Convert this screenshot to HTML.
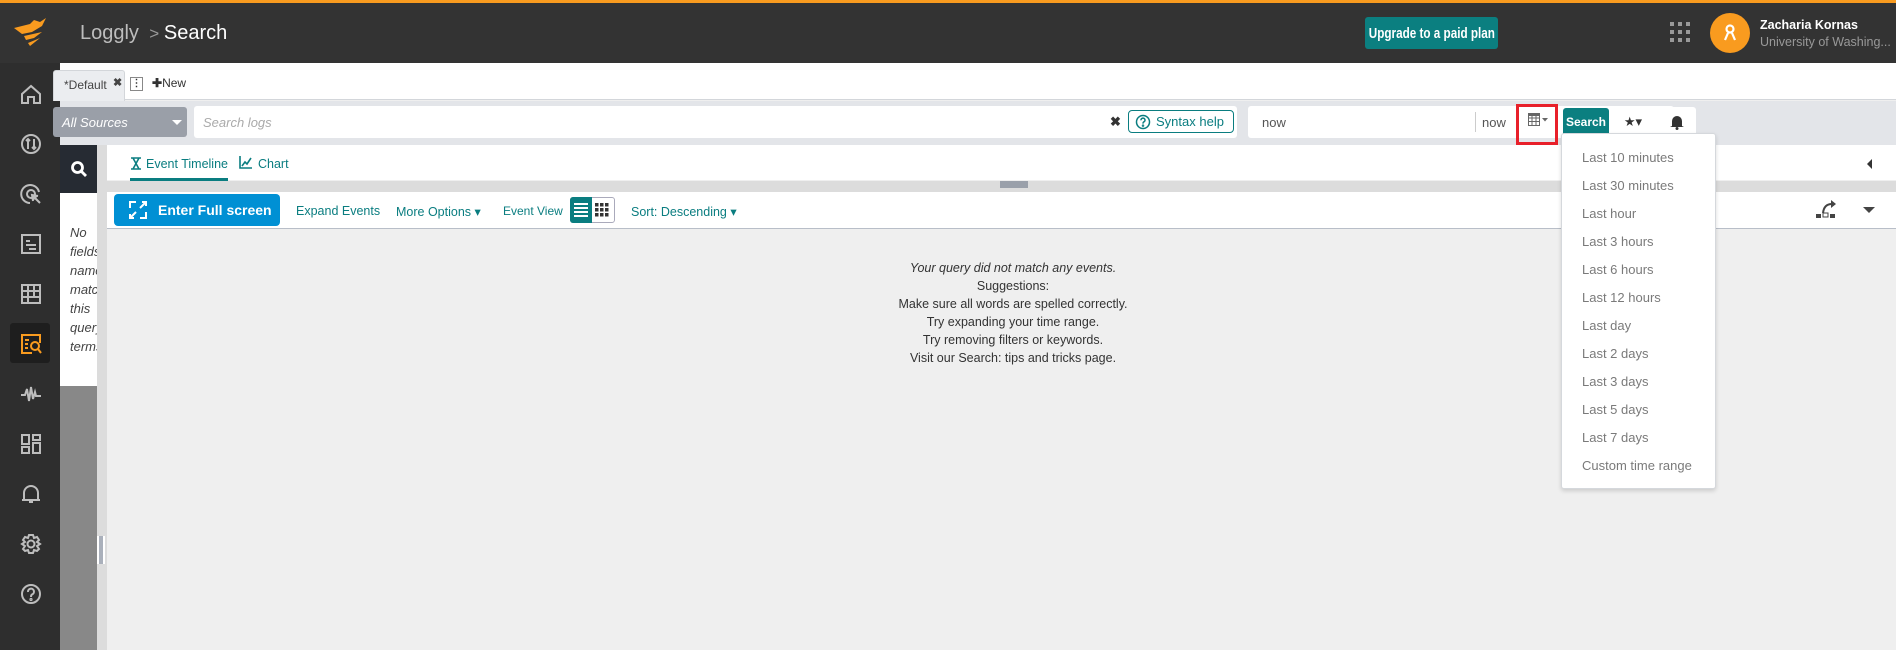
<!DOCTYPE html>
<html><head><meta charset="utf-8">
<style>
*{box-sizing:border-box;margin:0;padding:0}
body{width:1896px;height:650px;overflow:hidden;position:relative;font-family:"Liberation Sans",sans-serif;background:#efefef}
.a{position:absolute;white-space:nowrap}
.teal{color:#0a7d80}
.sb svg{position:absolute;left:20px;width:22px;height:22px;fill:none;stroke:#bdbdbd;stroke-width:2}
.dd div{height:28px;line-height:28px;padding-left:20px;font-size:13px;color:#7a7a7a}
.msg div{height:18px;line-height:18px}
</style></head><body>
<!-- header -->
<div class="a" style="left:0;top:0;width:1896px;height:3px;background:#f99b1f"></div>
<div class="a" style="left:0;top:3px;width:1896px;height:60px;background:#333"></div>
<svg class="a" style="left:12px;top:16px" width="36" height="32" viewBox="0 0 36 32"><path d="M2 12 L18 8 L22 4 L28 6 L34 2 L30 10 L20 16 L10 18 Z" fill="#f99b1f"/><path d="M12 20 L30 16 L22 22 L14 24 Z" fill="#f99b1f"/><path d="M16 27 L28 22 L18 30 Z" fill="#f99b1f"/></svg>
<div class="a" style="left:80px;top:22px;font-size:20px;color:#bdbdbd">Loggly <span style="color:#999;font-size:17px">&nbsp;&gt;&nbsp;</span><span style="color:#fff">Search</span></div>
<div class="a" style="left:1365px;top:17px;width:133px;height:32px;background:#0b7f80;border-radius:3px;display:flex;justify-content:center;align-items:center"><span style="display:inline-block;color:#fff;font-weight:bold;font-size:15px;transform:scaleX(0.78)">Upgrade to a paid plan</span></div>
<svg class="a" style="left:1670px;top:22px" width="22" height="22"><g fill="#999"><rect x="0" y="0" width="4" height="4"/><rect x="8" y="0" width="4" height="4"/><rect x="16" y="0" width="4" height="4"/><rect x="0" y="8" width="4" height="4"/><rect x="8" y="8" width="4" height="4"/><rect x="16" y="8" width="4" height="4"/><rect x="0" y="16" width="4" height="4"/><rect x="8" y="16" width="4" height="4"/><rect x="16" y="16" width="4" height="4"/></g></svg>
<div class="a" style="left:1710px;top:13px;width:40px;height:40px;border-radius:50%;background:#f99b1f"></div>
<svg class="a" style="left:1720px;top:23px" width="20" height="20" viewBox="0 0 20 20" fill="none" stroke="#fff" stroke-width="2.2"><circle cx="10" cy="6" r="3.5"/><path d="M5 17 L8 10 M15 17 L12 10"/></svg>
<div class="a" style="left:1760px;top:18px;font-size:12.5px;font-weight:bold;color:#fff">Zacharia Kornas</div>
<div class="a" style="left:1760px;top:35px;font-size:12.5px;color:#999">University of Washing...</div>
<!-- sidebar -->
<div class="a sb" style="left:0;top:63px;width:60px;height:587px;background:#2e2e2e">
<div class="a" style="left:10px;top:260px;width:40px;height:40px;background:#1e1e1e;border-radius:3px"></div>
<svg style="top:20px" viewBox="0 0 22 22"><path d="M2 11 L11 3 L20 11 V20 H14 V14 H8 V20 H2 Z"/></svg>
<svg style="top:70px" viewBox="0 0 22 22"><circle cx="11" cy="11" r="9"/><path d="M8 6 V16 M6 8 L8 6 L10 8 M14 6 V16 M12 14 L14 16 L16 14"/></svg>
<svg style="top:120px" viewBox="0 0 22 22"><path d="M19 9 A9 9 0 1 0 10 20"/><circle cx="11" cy="11" r="4"/><path d="M12 12 L20 20 M13 18 L12 12 L18 13" fill="#bdbdbd"/></svg>
<svg style="top:170px" viewBox="0 0 22 22"><rect x="2" y="2" width="18" height="18"/><path d="M6 8 H10 M6 12 H16 M9 16 H16"/></svg>
<svg style="top:220px" viewBox="0 0 22 22"><path d="M2 2 H20 V20 H2 Z M2 8 H20 M2 14 H20 M8 2 V20 M14 2 V14"/></svg>
<svg style="top:270px;stroke:#f99b1f" viewBox="0 0 22 22"><path d="M20 10 V2 H2 V20 H12"/><path d="M5 7 H9 M5 11 H8 M5 15 H8"/><circle cx="15" cy="13" r="4"/><path d="M18 16 L21 20"/></svg>
<svg style="top:320px" viewBox="0 0 22 22"><path d="M1 12 H5 L7 6 L9 18 L11 4 L13 16 L15 9 L16 13 H21"/></svg>
<svg style="top:370px" viewBox="0 0 22 22"><rect x="2" y="2" width="7" height="9"/><rect x="2" y="14" width="7" height="6"/><rect x="13" y="2" width="7" height="5"/><rect x="13" y="10" width="7" height="10"/></svg>
<svg style="top:420px" viewBox="0 0 22 22"><path d="M4 17 V10 A7 7 0 0 1 18 10 V17 Z M2 17 H20 M9 19 H13"/></svg>
<svg style="top:470px" viewBox="0 0 22 22"><circle cx="11" cy="11" r="3.5"/><path d="M9 2 H13 L14 5 L17 4 L19 7 L17 9 L20 11 L17 13 L19 16 L17 18 L14 17 L13 20 H9 L8 17 L5 18 L3 16 L5 13 L2 11 L5 9 L3 7 L5 4 L8 5 Z"/></svg>
<svg style="top:520px" viewBox="0 0 22 22"><circle cx="11" cy="11" r="9"/><path d="M8 9 A3 3 0 1 1 12 11.5 Q11 12 11 14"/><circle cx="11" cy="16.5" r=".6"/></svg>
</div>
<!-- tab row -->
<div class="a" style="left:60px;top:63px;width:1836px;height:37px;background:#fff;border-bottom:1px solid #d3d6da"></div>
<div class="a" style="left:53px;top:70px;width:72px;height:31px;background:#ebedf0;border:1px solid #d3d6da;border-bottom:none;border-radius:3px 3px 0 0"></div>
<div class="a" style="left:64px;top:78px;font-size:12px;color:#444">*Default</div>
<div class="a" style="left:113px;top:76px;font-size:11px;color:#444;font-weight:bold">✖</div>
<div class="a" style="left:130px;top:77px;width:13px;height:14px;border:1px solid #888;font-size:10px;line-height:12px;text-align:center;color:#333;font-weight:bold">⋮</div>
<div class="a" style="left:152px;top:76px;font-size:12px;color:#333"><b>✚</b>New</div>
<!-- search row -->
<div class="a" style="left:60px;top:101px;width:1836px;height:44px;background:#e3e5e9"></div>
<div class="a" style="left:53px;top:107px;width:134px;height:30px;background:#9a9fa8;border-radius:3px"></div>
<div class="a" style="left:62px;top:115px;font-size:13px;color:#fff;font-style:italic">All Sources</div>
<div class="a" style="left:172px;top:120px;border:5px solid transparent;border-top:5px solid #fff"></div>
<div class="a" style="left:194px;top:106px;width:1043px;height:32px;background:#fff;border-radius:3px"></div>
<div class="a" style="left:203px;top:115px;font-size:13px;color:#aaa;font-style:italic">Search logs</div>
<div class="a" style="left:1110px;top:114px;font-size:13px;color:#333;font-weight:bold">✖</div>
<div class="a" style="left:1128px;top:110px;width:106px;height:23px;border:1px solid #0a7d80;border-radius:4px;display:flex;align-items:center;padding-left:6px;font-size:13px"><svg width="16" height="16" viewBox="0 0 16 16" fill="none" stroke="#0a7d80" stroke-width="1.5"><circle cx="8" cy="8" r="6.5"/><path d="M6 6.3 A2 2 0 1 1 8.6 8 Q8 8.4 8 9.6"/><circle cx="8" cy="11.6" r=".5"/></svg><span class="teal" style="margin-left:5px">Syntax help</span></div>
<div class="a" style="left:1248px;top:106px;width:426px;height:32px;background:#fff;border-radius:3px"></div>
<div class="a" style="left:1262px;top:115px;font-size:13px;color:#555">now</div>
<div class="a" style="left:1475px;top:112px;width:1px;height:20px;background:#ccc"></div>
<div class="a" style="left:1482px;top:115px;font-size:13px;color:#555">now</div>
<svg class="a" style="left:1528px;top:113px" width="22" height="14"><rect x="0.5" y="1.5" width="11" height="11" fill="none" stroke="#666"/><path d="M0 5 H12 M0 8.5 H12 M4 2 V13 M8 2 V13" stroke="#666"/><rect x="0" y="0" width="12" height="3" fill="#666"/><path d="M14 5 L20 5 L17 8.5 Z" fill="#666"/></svg>
<div class="a" style="left:1516px;top:104px;width:42px;height:41px;border:3px solid #e8202a"></div>
<div class="a" style="left:1563px;top:108px;width:46px;height:29px;background:#0b7f80;border-radius:3px;color:#fff;font-weight:bold;font-size:12px;line-height:29px;text-align:center">Search</div>
<div class="a" style="left:1617px;top:107px;width:32px;height:30px;background:#fff;border-radius:3px;font-size:13px;line-height:30px;text-align:center;color:#333">★▾</div>
<div class="a" style="left:1656px;top:107px;width:40px;height:30px;background:#fff;border-radius:3px"></div>
<svg class="a" style="left:1670px;top:114px" width="14" height="16" fill="#333"><path d="M2 12 V7 A5 5 0 0 1 12 7 V12 L14 13 H0 Z"/><circle cx="7" cy="14.5" r="1.5"/></svg>
<!-- left panel -->
<div class="a" style="left:60px;top:145px;width:37px;height:48px;background:#262b33"></div>
<svg class="a" style="left:70px;top:160px" width="18" height="18" viewBox="0 0 18 18" fill="none" stroke="#fff" stroke-width="2.8"><circle cx="7.5" cy="7.5" r="5"/><path d="M11 11 L16 16"/></svg>
<div class="a" style="left:60px;top:193px;width:37px;height:193px;background:#fff;overflow:hidden;font-size:13px;font-style:italic;color:#444;line-height:19px;padding:30px 0 0 10px">No<br>fields<br>names<br>match<br>this<br>query<br>terms</div>
<div class="a" style="left:60px;top:386px;width:37px;height:264px;background:#888"></div>
<div class="a" style="left:97px;top:145px;width:10px;height:505px;background:#dcdcdc"></div>
<div class="a" style="left:97px;top:536px;width:8px;height:28px;background:#aab0bb;border:1px solid #fff;border-width:0 2px"></div>
<!-- timeline row -->
<div class="a" style="left:107px;top:145px;width:1789px;height:35px;background:#fff"></div>
<svg class="a" style="left:131px;top:157px" width="10" height="13" fill="none" stroke="#0a7d80" stroke-width="1.6"><path d="M0 1 H10 M0 12 H10 M2 1 L8 12 M8 1 L2 12"/></svg>
<div class="a teal" style="left:146px;top:157px;font-size:12.5px">Event Timeline</div>
<svg class="a" style="left:239px;top:156px" width="13" height="13" fill="none" stroke="#0a7d80" stroke-width="1.6"><path d="M1 0 V12 H13 M3 10 L6 6 L8 8 L12 2"/></svg>
<div class="a teal" style="left:258px;top:157px;font-size:12.5px">Chart</div>
<div class="a" style="left:130px;top:178px;width:98px;height:3px;background:#0a7d80"></div>
<div class="a" style="left:107px;top:181px;width:1789px;height:11px;background:#dcdcdc"></div>
<div class="a" style="left:1000px;top:181px;width:28px;height:7px;background:#9aa0aa;border-top:2px solid #9aa0aa"></div>
<div class="a" style="left:1867px;top:159px;border:5px solid transparent;border-right:5px solid #333;border-left:none"></div>
<!-- toolbar -->
<div class="a" style="left:107px;top:192px;width:1789px;height:37px;background:#fff;border-bottom:1px solid #b8bec8"></div>
<div class="a" style="left:114px;top:194px;width:166px;height:32px;background:#0090d4;border-radius:4px;color:#fff;font-weight:bold;font-size:14px;line-height:32px;padding-left:44px">Enter Full screen</div>
<svg class="a" style="left:129px;top:201px" width="18" height="18" fill="none" stroke="#fff" stroke-width="2"><path d="M1 7 V1 H7 M11 17 H17 V11 M17 1 L11 7 M13 1 H17 V5 M1 17 L7 11 M1 13 V17 H5"/></svg>
<div class="a teal" style="left:296px;top:204px;font-size:12.5px">Expand Events</div>
<div class="a teal" style="left:396px;top:204px;font-size:12.5px">More Options ▾</div>
<div class="a teal" style="left:503px;top:204px;font-size:12px">Event View</div>
<div class="a" style="left:570px;top:197px;width:45px;height:26px;border:1px solid #aab;border-radius:3px;background:#fff"></div>
<div class="a" style="left:570px;top:197px;width:22px;height:26px;background:#0a7d80;border-radius:3px 0 0 3px"></div>
<svg class="a" style="left:574px;top:203px" width="14" height="14" fill="#fff"><rect y="0" width="14" height="2"/><rect y="4" width="14" height="2"/><rect y="8" width="14" height="2"/><rect y="12" width="14" height="2"/></svg>
<svg class="a" style="left:595px;top:203px" width="14" height="14" fill="#333"><rect x="0" y="0" width="3.5" height="3.5"/><rect x="5" y="0" width="3.5" height="3.5"/><rect x="10" y="0" width="3.5" height="3.5"/><rect x="0" y="5" width="3.5" height="3.5"/><rect x="5" y="5" width="3.5" height="3.5"/><rect x="10" y="5" width="3.5" height="3.5"/><rect x="0" y="10" width="3.5" height="3.5"/><rect x="5" y="10" width="3.5" height="3.5"/><rect x="10" y="10" width="3.5" height="3.5"/></svg>
<div class="a teal" style="left:631px;top:204px;font-size:12.5px">Sort: Descending ▾</div>
<svg class="a" style="left:1816px;top:200px" width="22" height="20" fill="#444"><rect x="0" y="14" width="5" height="4"/><rect x="14" y="14" width="5" height="4"/><rect x="7" y="13" width="5" height="4" fill="none" stroke="#444"/><path d="M7 13 Q8 4 16 4" stroke="#444" stroke-width="2" fill="none"/><path d="M15 0 L20 4 L15 8 Z"/></svg>
<div class="a" style="left:1863px;top:207px;border:6px solid transparent;border-top:6px solid #444"></div>
<!-- message -->
<div class="a msg" style="left:813px;top:259px;width:400px;text-align:center;font-size:12.5px;color:#333">
<div style="font-style:italic">Your query did not match any events.</div>
<div>Suggestions:</div>
<div>Make sure all words are spelled correctly.</div>
<div>Try expanding your time range.</div>
<div>Try removing filters or keywords.</div>
<div>Visit our Search: tips and tricks page.</div>
</div>
<!-- dropdown -->
<div class="a dd" style="left:1561px;top:133px;width:155px;height:356px;background:#fff;border:1px solid #d5d8dc;border-radius:3px;box-shadow:0 2px 4px rgba(0,0,0,.15);padding-top:10px">
<div>Last 10 minutes</div><div>Last 30 minutes</div><div>Last hour</div><div>Last 3 hours</div><div>Last 6 hours</div><div>Last 12 hours</div><div>Last day</div><div>Last 2 days</div><div>Last 3 days</div><div>Last 5 days</div><div>Last 7 days</div><div>Custom time range</div>
</div>
</body></html>
